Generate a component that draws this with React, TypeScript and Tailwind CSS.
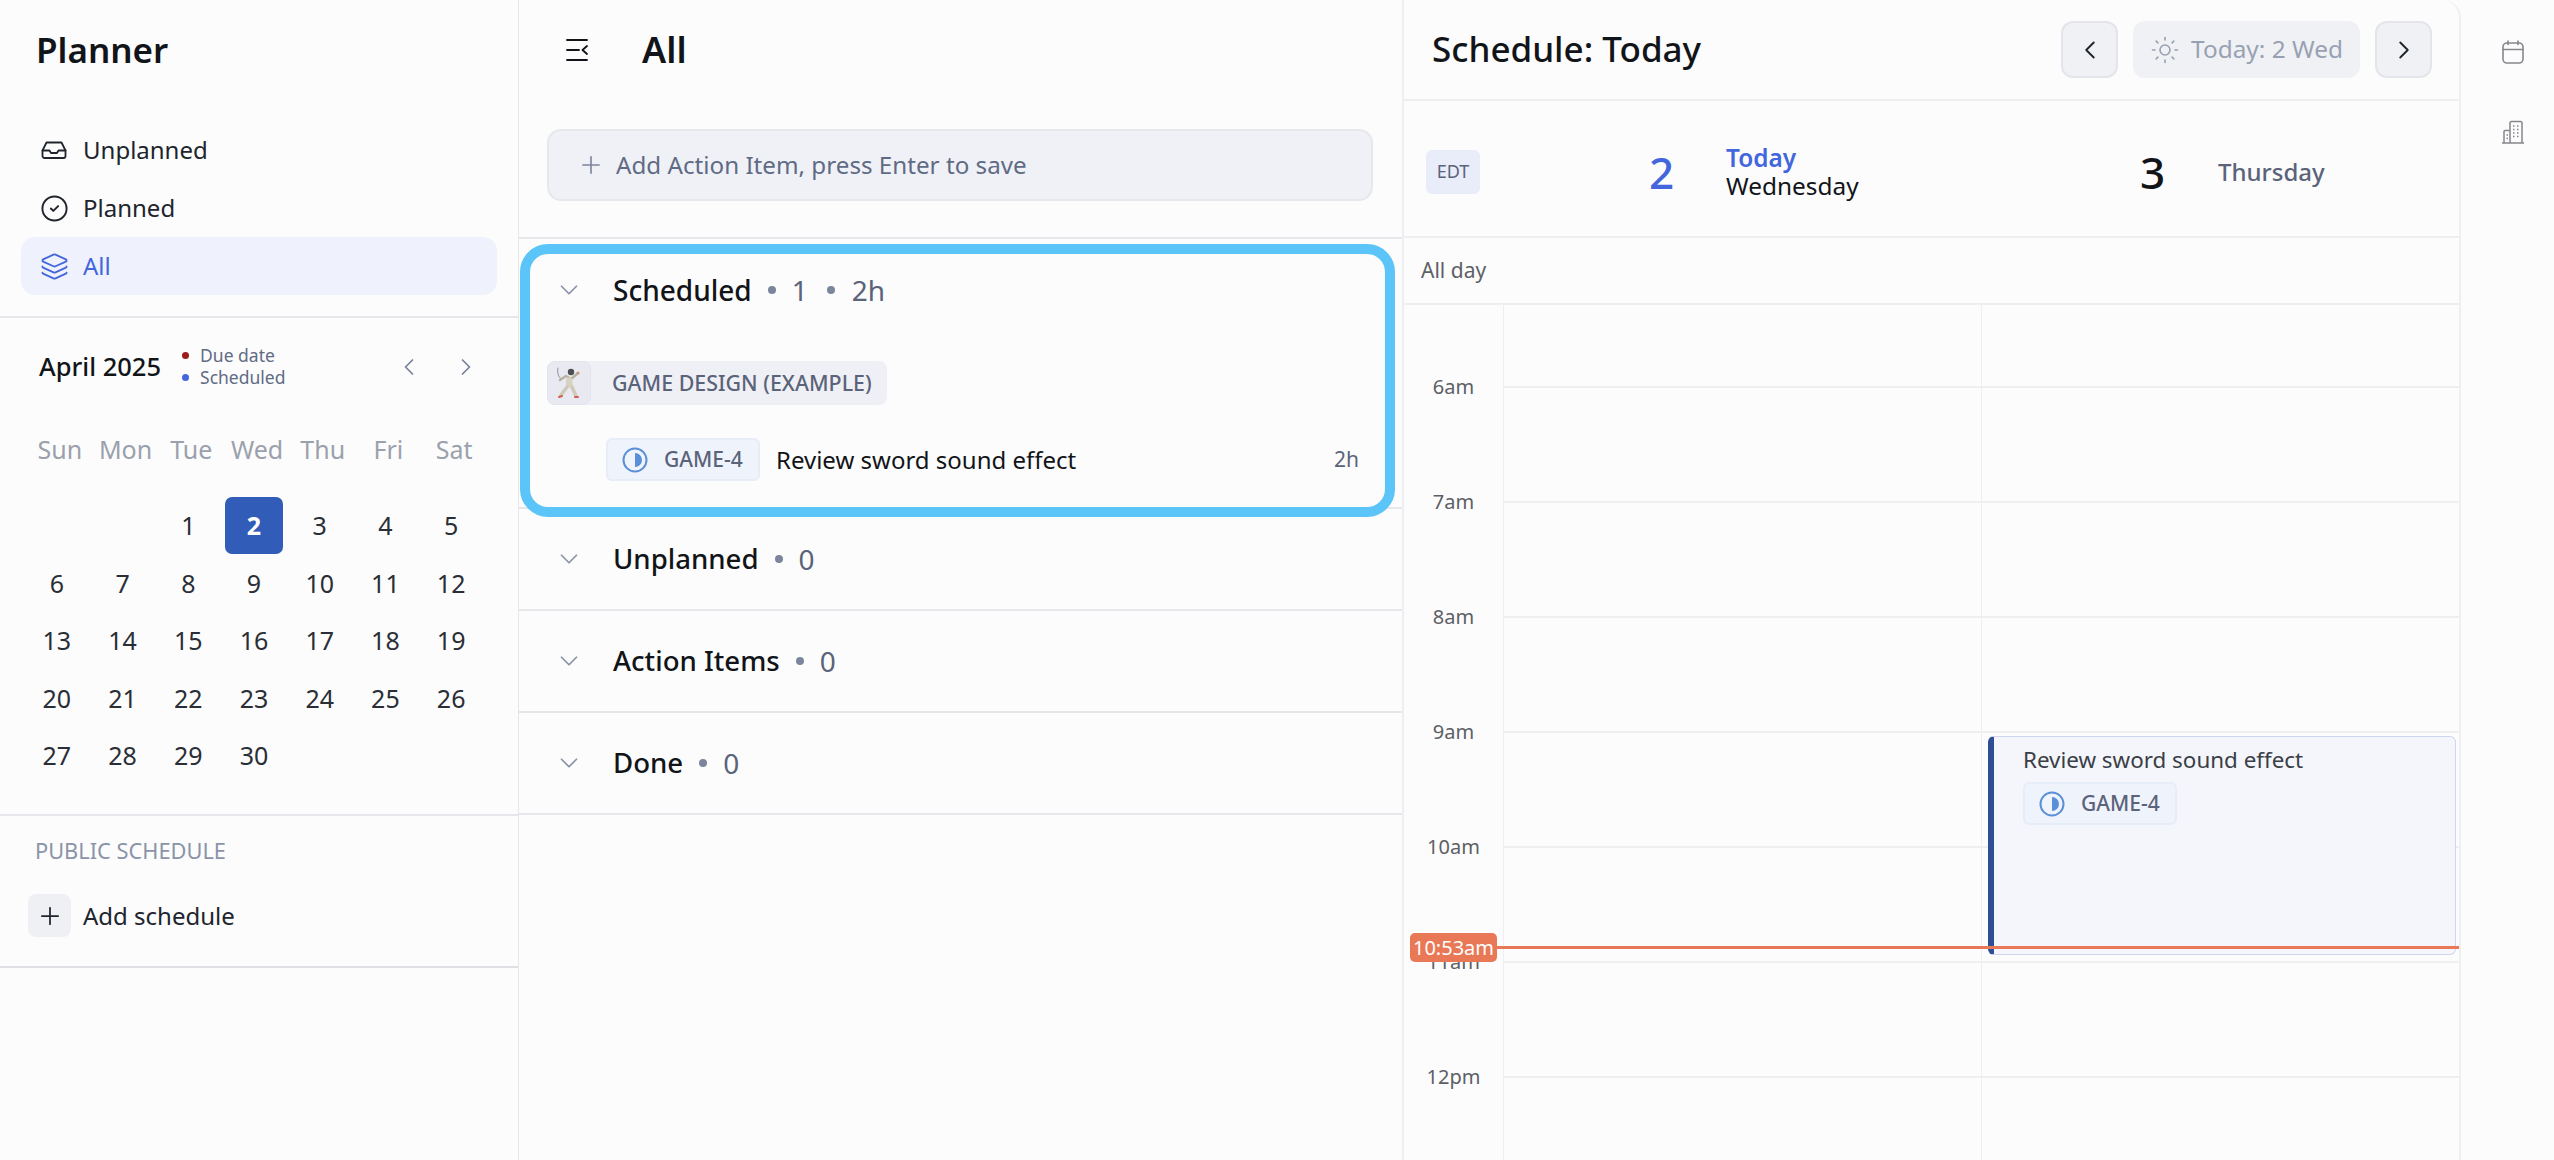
import { ChevronDown, ChevronLeft, ChevronRight, CircleCheck, Layers, Plus, Sun } from "lucide-react";

const WEEKDAYS = ["Sun", "Mon", "Tue", "Wed", "Thu", "Fri", "Sat"];
const DAYS = [null, null, 1, 2, 3, 4, 5, 6, 7, 8, 9, 10, 11, 12, 13, 14, 15, 16, 17, 18, 19, 20, 21, 22, 23, 24, 25, 26, 27, 28, 29, 30];
const HOURS = ["6am", "7am", "8am", "9am", "10am", "11am", "12pm"];

function InboxIcon() {
  return (
    <svg width="26" height="26" viewBox="0 0 26 26" fill="none" stroke="currentColor" strokeWidth="1.8" strokeLinejoin="round" strokeLinecap="round">
      <path d="M1.5 13.5 5.5 5.5h15l4 8v5.5a2 2 0 0 1-2 2h-19a2 2 0 0 1-2-2z" />
      <path d="M1.5 13.5h7l1.5 2.5h6l1.5-2.5h7" />
    </svg>
  );
}

function CollapseIcon() {
  return (
    <svg width="22" height="22" viewBox="0 0 22 22" fill="none" stroke="#111418" strokeWidth="1.8" strokeLinecap="round" strokeLinejoin="round">
      <path d="M1 1h20M1 21h20M1 11h12M21 7l-4.5 4 4.5 4" />
    </svg>
  );
}

function StatusIcon() {
  return (
    <svg width="26" height="26" viewBox="0 0 26 26" fill="none">
      <circle cx="13" cy="13" r="11.5" stroke="#5b8fd8" strokeWidth="2" />
      <path d="M13 6a7 7 0 0 1 0 14z" fill="#5b8fd8" />
    </svg>
  );
}

function FencerIcon() {
  return (
    <svg width="30" height="34" viewBox="0 0 30 34" fill="none" strokeLinecap="round" strokeLinejoin="round">
      <path d="M4 2c-1 4 0 8 3 11" stroke="#8a8f99" strokeWidth="1" />
      <path d="M6 14l6-4 5 3 6-5" stroke="#b9b3a4" strokeWidth="2.5" />
      <circle cx="17" cy="6" r="3.2" fill="#4d4f55" />
      <circle cx="24" cy="7" r="1.6" fill="#c49a7c" />
      <path d="M12 11l6 1 1 9-7 1z" fill="#d8d2c2" />
      <path d="M13 21l-6 8M18 21l4 9" stroke="#cfc9b9" strokeWidth="3.5" />
      <path d="M5 31l3-1M21 31l3 0" stroke="#d0604f" strokeWidth="2" />
    </svg>
  );
}

function CalendarIcon() {
  return (
    <svg width="24" height="24" viewBox="0 0 24 24" fill="none" stroke="#85878c" strokeWidth="1.6" strokeLinecap="round">
      <rect x="2" y="3" width="20" height="20" rx="4" />
      <path d="M2 9.5h20M7 1v3.5M17 1v3.5" />
    </svg>
  );
}

function BuildingsIcon() {
  return (
    <svg width="24" height="24" viewBox="0 0 24 24" fill="none" stroke="#85878c" strokeWidth="1.5">
      <path d="M1 23h22" />
      <path d="M9 23V3a1.5 1.5 0 0 1 1.5-1.5h9A1.5 1.5 0 0 1 21 3v20" />
      <path d="M3 23V11.5a1 1 0 0 1 1-1h5" />
      <path d="M12 6h1.5M16 6h1.5M12 9.500h1.500M16 9.500h1.500M12 13h1.500M16 13h1.500M12 16.500h1.500M16 16.500h1.500M5.500 15H7M5.500 18.500H7" strokeWidth="1.6" />
    </svg>
  );
}

function TaskChip() {
  return (
    <div className="flex h-[43px] w-[154px] shrink-0 items-center gap-[16px] rounded-[6px] border-2 border-[#e6ecf8] bg-[#eff3fc] pl-[14px]">
      <StatusIcon />
      <span className="text-[21px] font-medium leading-none text-[#5a6379]">GAME-4</span>
    </div>
  );
}

function Sidebar() {
  return (
    <aside className="flex w-[519px] shrink-0 flex-col border-r border-[#e6e7ea]">
      <div className="flex h-[100px] items-center pl-[36px] text-[35px] font-semibold text-[#111418]">Planner</div>
      <nav className="border-b-2 border-[#e6e7ea] px-[21px] pb-[21px] pt-[21px] text-[24px] text-[#20242c]">
        <div className="flex h-[58px] items-center gap-[16px] pl-[20px]">
          <InboxIcon />
          <span>Unplanned</span>
        </div>
        <div className="flex h-[58px] items-center gap-[14px] pl-[19px]">
          <CircleCheck size={29} strokeWidth={1.6} />
          <span>Planned</span>
        </div>
        <div className="flex h-[58px] items-center gap-[14px] rounded-[14px] bg-[#eff2fd] pl-[19px] text-[#4366dc]">
          <Layers size={29} strokeWidth={1.5} />
          <span>All</span>
        </div>
      </nav>

      <section className="flex h-[498px] flex-col border-b-2 border-[#e6e7ea]">
        <div className="mt-[23px] flex h-[50px] items-center pl-[39px] pr-[30px]">
          <span className="text-[25.5px] font-medium text-[#111418]">April 2025</span>
          <div className="ml-[21px] flex flex-col text-[17.5px] leading-[22px] text-[#5f6b85]">
            <span className="flex items-center gap-[11px]">
              <span className="size-[7px] rounded-full bg-[#9c1c1c]" />
              Due date
            </span>
            <span className="flex items-center gap-[11px]">
              <span className="size-[7px] rounded-full bg-[#4366dc]" />
              Scheduled
            </span>
          </div>
          <ChevronLeft className="ml-auto mt-[2px] text-[#76809a]" size={28} strokeWidth={1.5} />
          <ChevronRight className="ml-[29px] mr-[8px] mt-[2px] text-[#76809a]" size={28} strokeWidth={1.5} />
        </div>
        <div className="ml-[27px] mt-[40px] grid w-[460px] grid-cols-7 text-center text-[25px] leading-[36px] text-[#9aa1ad]">
          {WEEKDAYS.map((d) => (
            <span key={d}>{d}</span>
          ))}
        </div>
        <div className="ml-[24px] mt-[30px] grid w-[460px] grid-cols-7 auto-rows-[57.5px] text-center text-[25px] text-[#2a2e36]">
          {DAYS.map((d, i) =>
            d === 2 ? (
              <div key={i} className="flex items-center justify-center">
                <span className="flex h-[57px] w-[58px] items-center justify-center rounded-[7px] bg-[#315cb8] font-bold text-white">2</span>
              </div>
            ) : (
              <div key={i} className="flex items-center justify-center">
                {d}
              </div>
            ),
          )}
        </div>
      </section>

      <section className="flex h-[152px] flex-col border-b-2 border-[#dfe0e4] px-[28px]">
        <div className="mt-[22px] pl-[8px] text-[21.8px] leading-[26px] text-[#8a93a8] -ml-px">PUBLIC SCHEDULE</div>
        <div className="mt-[30px] flex items-center gap-[12px]">
          <span className="flex size-[43px] items-center justify-center rounded-[8px] bg-[#eff0f4] text-[#20242c]">
            <Plus size={28} strokeWidth={1.5} />
          </span>
          <span className="text-[24px] text-[#20242c]">Add schedule</span>
        </div>
      </section>
    </aside>
  );
}

function SectionRow({ title, count }: { title: string; count: string }) {
  return (
    <div className="flex h-[102px] items-center border-b-2 border-[#e6e7ea]">
      <ChevronDown className="ml-[35px] text-[#8a93a8]" size={30} strokeWidth={1.4} />
      <span className="ml-[29px] text-[27.6px] font-medium text-[#111418]">{title}</span>
      <span className="mx-[16px] size-[8px] rounded-full bg-[#7b859c]" />
      <span className="text-[28px] text-[#5a6379]">{count}</span>
    </div>
  );
}

function TaskList() {
  return (
    <main className="flex w-[883px] shrink-0 flex-col">
      <div className="flex h-[100px] items-center pl-[47px]">
        <CollapseIcon />
        <span className="ml-[54px] text-[36px] font-semibold text-[#111418]">All</span>
      </div>
      <div className="border-b-2 border-[#e6e7ea] px-[28px] pb-[36px] pt-[29px]">
        <div className="flex h-[72px] w-[826px] items-center rounded-[14px] border-2 border-[#e6e8ee] bg-[#f0f1f6] pl-[28px] text-[#5f6b85]">
          <Plus className="text-[#7b859c]" size={28} strokeWidth={1.4} />
          <span className="ml-[11px] text-[24.2px]">Add Action Item, press Enter to save</span>
        </div>
      </div>

      <section className="relative h-[270px] border-b-2 border-[#e6e7ea]">
        <div className="absolute left-px top-[5px] z-10 h-[273px] w-[875px] rounded-[28px] border-[10px] border-[#5bc4f8]" />
        <div className="flex h-[102px] items-center">
          <ChevronDown className="ml-[35px] text-[#8a93a8]" size={30} strokeWidth={1.4} />
          <span className="ml-[29px] text-[28px] font-medium text-[#111418]">Scheduled</span>
          <span className="mx-[16px] size-[8px] rounded-full bg-[#7b859c]" />
          <span className="text-[28px] text-[#5a6379]">1</span>
          <span className="ml-[19px] mr-[17px] size-[8px] rounded-full bg-[#7b859c]" />
          <span className="text-[28px] text-[#5a6379]">2h</span>
        </div>
        <div className="ml-[28px] mt-[20px] flex h-[44px] w-[340px] items-center rounded-[8px] bg-[#eff0f6]">
          <span className="flex size-[44px] items-center justify-center rounded-[8px] border border-[#e2e4ee] bg-[#e8e9f1]">
            <FencerIcon />
          </span>
          <span className="ml-[21px] text-[21.4px] font-medium text-[#5a6379]">GAME DESIGN (EXAMPLE)</span>
        </div>
        <div className="mt-[33px] flex items-center pl-[87px] pr-[43px]">
          <TaskChip />
          <span className="ml-[16px] text-[24px] text-[#111418]">Review sword sound effect</span>
          <span className="ml-auto text-[21px] text-[#5a6379]">2h</span>
        </div>
      </section>

      <SectionRow title="Unplanned" count="0" />
      <SectionRow title="Action Items" count="0" />
      <SectionRow title="Done" count="0" />
    </main>
  );
}

function Schedule() {
  return (
    <section className="flex h-[1160px] w-[1059px] shrink-0 flex-col overflow-hidden rounded-tr-[18px] border-x-2 border-[#eeeff1]">
      <header className="flex h-[101px] shrink-0 items-center border-b-2 border-[#eeeff1] pl-[28px] pr-[27px]">
        <h1 className="text-[35px] font-medium text-[#111418]">Schedule: Today</h1>
        <button className="ml-auto flex h-[57px] w-[57px] items-center justify-center rounded-[12px] border-2 border-[#e4e5ea] bg-[#f0f1f4] text-[#20242c]">
          <ChevronLeft size={30} strokeWidth={1.5} />
        </button>
        <div className="ml-[15px] flex h-[57px] w-[227px] items-center justify-center gap-[11px] rounded-[12px] bg-[#f0f1f4] text-[24.4px] text-[#98a1b3]">
          <Sun size={30} strokeWidth={1.3} />
          Today: 2 Wed
        </div>
        <button className="ml-[15px] flex h-[57px] w-[57px] items-center justify-center rounded-[12px] border-2 border-[#e4e5ea] bg-[#f0f1f4] text-[#20242c]">
          <ChevronRight size={30} strokeWidth={1.5} />
        </button>
      </header>

      <div className="grid h-[137px] shrink-0 grid-cols-[100px_478px_1fr] items-center border-b-2 border-[#eeeff1] pt-[6px]">
        <span className="ml-[22px] flex h-[44px] w-[54px] items-center justify-center rounded-[6px] bg-[#e9ecf9] text-[18px] text-[#5a6379]">EDT</span>
        <div className="flex items-center pl-[145px]">
          <span className="w-[77px] text-[44px] font-medium leading-none text-[#4366dc]">2</span>
          <div className="flex flex-col text-[24.4px] leading-[28px]">
            <span className="font-semibold text-[#4366dc]">Today</span>
            <span className="text-[#111418]">Wednesday</span>
          </div>
        </div>
        <div className="flex items-center pl-[158px]">
          <span className="w-[78px] text-[44px] font-medium leading-none text-[#111418]">3</span>
          <span className="text-[24px] font-medium text-[#5a6379]">Thursday</span>
        </div>
      </div>

      <div className="flex h-[67px] shrink-0 items-center border-b-2 border-[#eeeff1] pl-[17px] text-[21px] text-[#5c6066]">All day</div>

      <div className="relative flex-1">
        <div className="grid h-[81px] grid-cols-[100px_478px_1fr]">
          <div className="border-r border-[#eeeff1]" />
          <div className="border-r border-[#eeeff1]" />
          <div />
        </div>
        {HOURS.map((h) => (
          <div key={h} className="grid h-[115px] grid-cols-[100px_478px_1fr]">
            <div className="border-r border-[#eeeff1] text-center">
              <span className="block -translate-y-[13px] text-[20px] leading-[28px] text-[#5c6066]">{h}</span>
            </div>
            <div className="border-r border-t-2 border-[#eeeff1]" />
            <div className="border-t-2 border-[#eeeff1]" />
          </div>
        ))}

        {/* Event block */}
        <div className="absolute left-[584px] top-[431px] h-[219px] w-[468px] rounded-[6px] border border-l-[6px] border-[#cdd6ee] border-l-[#2f4f94] bg-[#f4f6fc] pl-[29px] pt-[9px]">
          <div className="text-[22.4px] leading-[28px] text-[#3a3e46]">Review sword sound effect</div>
          <div className="mt-[8px]">
            <TaskChip />
          </div>
        </div>

        {/* Current time */}
        <div className="absolute left-[6px] right-0 top-[628px] z-10 flex items-center">
          <span className="flex h-[29px] w-[87px] items-center justify-center rounded-[5px] bg-[#e97857] text-[20px] text-white">10:53am</span>
          <span className="h-[3px] flex-1 bg-[#e97857]" />
        </div>
      </div>
    </section>
  );
}

function Rail() {
  return (
    <aside className="flex flex-1 flex-col items-center gap-[56px] pl-[10px] pt-[40px]">
      <CalendarIcon />
      <BuildingsIcon />
    </aside>
  );
}

export default function App() {
  return (
    <div className="flex h-[1160px] w-[2554px] overflow-hidden bg-[#fcfcfc] font-['Noto_Sans',sans-serif]">
      <Sidebar />
      <TaskList />
      <Schedule />
      <Rail />
    </div>
  );
}
